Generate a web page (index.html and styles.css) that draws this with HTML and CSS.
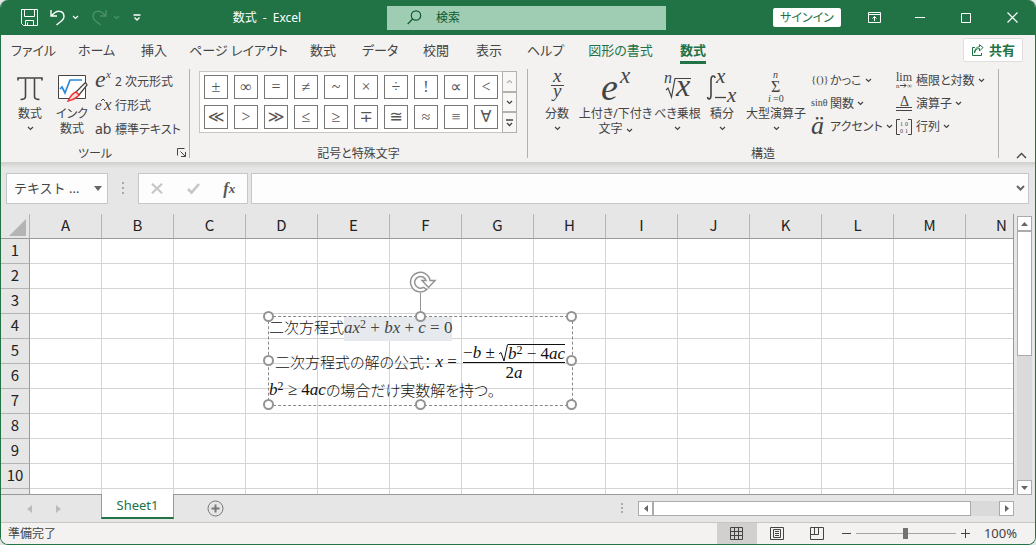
FILE: index.html
```html
<!DOCTYPE html>
<html lang="ja">
<head>
<meta charset="utf-8">
<title>数式 - Excel</title>
<link rel="stylesheet" href="styles.css">
</head>
<body>
<svg class="defs" aria-hidden="true">
  <symbol id="chev" viewBox="0 0 7 5"><path d="M1 1l2.5 2.5L6 1" fill="none" stroke="currentColor" stroke-width="1.2"/></symbol>
</svg>
<div class="window">
  <header class="titlebar">
    <div class="quick">
      <button class="qa qa-save" aria-label="上書き保存"><svg width="17" height="17" viewBox="0 0 17 17" fill="none" stroke="currentColor"><path d="M.5.5h16v16h-14l-2-2zM3.500.5v7h10v-7M4.500 16.500v-5h8v5M6.500 13.500v3"/></svg></button>
      <button class="qa" aria-label="元に戻す"><svg width="16" height="17" viewBox="0 0 16 17" fill="none" stroke="currentColor" stroke-width="1.400"><path d="M1 1v6h6M1 7l4-3.500C9 .8 14 2.500 14 7.500c0 2-1 3-2 4L6.500 16"/></svg><svg class="chev"><use href="#chev"/></svg></button>
      <button class="qa qa-off" aria-label="やり直し"><svg width="16" height="17" viewBox="0 0 16 17" fill="none" stroke="currentColor" stroke-width="1.400"><path d="M15 1v6H9M15 7l-4-3.500C7 .8 2 2.500 2 7.500c0 2 1 3 2 4L9.500 16"/></svg><svg class="chev"><use href="#chev"/></svg></button>
      <button class="qa" aria-label="クイック アクセス"><svg width="8" height="7" viewBox="0 0 8 7" fill="none" stroke="currentColor" stroke-width="1.300"><path d="M.5 1h7M1.500 3.500L4 6l2.500-2.500"/></svg></button>
    </div>
    <h1 class="doc">数式&ensp;-&ensp;Excel</h1>
    <label class="search"><svg width="15" height="15" viewBox="0 0 15 15" fill="none" stroke="currentColor" stroke-width="1.200"><circle cx="9" cy="5.500" r="4.700"/><path d="M5.600 9L.7 14"/></svg><input type="search" placeholder="検索" aria-label="検索"></label>
    <button class="signin">サインイン</button>
    <div class="wincontrols">
      <button aria-label="リボンの表示"><svg width="13" height="11" viewBox="0 0 13 11" fill="none" stroke="currentColor"><path d="M.5.5h12v10H.5zM.5 2.500h12M6.500 9V4.500M4.500 6.500l2-2 2 2"/></svg></button>
      <button aria-label="最小化"><svg width="10" height="10" viewBox="0 0 10 10" stroke="currentColor"><path d="M0 4.500h10"/></svg></button>
      <button aria-label="最大化"><svg width="10" height="10" viewBox="0 0 10 10" fill="none" stroke="currentColor"><path d="M.5.5h9v9h-9z"/></svg></button>
      <button aria-label="閉じる"><svg width="11" height="11" viewBox="0 0 11 11" stroke="currentColor" stroke-width="1.200"><path d="M.5.5l10 10M10.500.5l-10 10"/></svg></button>
    </div>
  </header>

  <nav class="tabs">
    <button>ファイル</button><button>ホーム</button><button>挿入</button><button>ページ レイアウト</button><button>数式</button><button>データ</button><button>校閲</button><button>表示</button><button>ヘルプ</button><button class="ctx">図形の書式</button><button class="ctx active"><span>数式</span></button>
    <button class="share"><svg width="13" height="13" viewBox="0 0 13 13" fill="none" stroke="currentColor"><path d="M4 3.500H1.500v8h9V9M3.500 9C4 6 6 4.500 8.500 4.500V7L12 3.500 8.500.7v2C5.500 3 3.500 5 3.500 9z"/></svg>共有</button>
  </nav>

  <div class="ribbon">
    <section class="group tools">
      <div class="body">
        <button class="big"><svg width="26" height="27" viewBox="0 0 26 27" fill="none" stroke="currentColor"><path d="M1 6V3.500h24V6" stroke-width="1.600"/><path d="M8.500 4v18c0 2-2 3-5 3M17.500 4v18c0 2 2 3 5 3" stroke-width="1.600"/></svg><span>数式</span><svg class="chev"><use href="#chev"/></svg></button>
        <button class="big"><svg width="30" height="30" viewBox="0 0 30 30" fill="none"><path d="M1.500 2.500h27v23h-27z" fill="#fff" stroke="#444"/><path d="M3 16l2-2 3 6 5-13h12" stroke="#2b88d8" stroke-width="1.700"/><path d="M28.500 9.500L19 19l3 3 8-10z" fill="#fff" stroke="#444" stroke-width="1.300"/><path d="M19 19c-4 1-6 5-8 9 4-1 8-2 11-6z" fill="#fbdada" stroke="#e33" stroke-width="1.300"/></svg><span>インク<br>数式</span></button>
        <div class="list">
          <button><svg width="17" height="22" viewBox="0 0 17 22" class="serif"><text x="0" y="17" font-size="24">e</text><text x="11" y="8" font-size="11">x</text></svg>2 次元形式</button>
          <button><svg width="17" height="16" viewBox="0 0 17 16" class="serif"><text x="0" y="13" font-size="15">e</text><text x="9" y="13" font-size="17">x</text><path d="M6 4l2-2 2 2" fill="none" stroke="currentColor"/></svg>行形式</button>
          <button><svg width="17" height="16" viewBox="0 0 17 16"><text x="0" y="13" font-size="14" class="sans">ab</text></svg>標準テキスト</button>
        </div>
      </div>
      <div class="caption">ツール<button class="launch" aria-label="ツールの設定"><svg width="9" height="9" viewBox="0 0 9 9" fill="none" stroke="currentColor"><path d="M.5 7.500v-7h7M3.500 3.500L8 8M8.500 4v4.500H4"/></svg></button></div>
    </section>

    <section class="group symbols">
      <div class="gallery">
        <div class="cells">
          <button>±</button><button>∞</button><button>=</button><button>≠</button><button>~</button><button>×</button><button>÷</button><button>!</button><button>∝</button><button>&lt;</button>
          <button>≪</button><button>&gt;</button><button>≫</button><button>≤</button><button>≥</button><button>∓</button><button>≅</button><button>≈</button><button>≡</button><button>∀</button>
        </div>
        <div class="gscroll">
          <button class="dim" aria-label="前へ"><svg class="chev up"><use href="#chev"/></svg></button>
          <button aria-label="次へ"><svg class="chev"><use href="#chev"/></svg></button>
          <button aria-label="その他"><svg width="7" height="8" viewBox="0 0 7 8" fill="none" stroke="currentColor" stroke-width="1.300"><path d="M0 1h7M1 4l2.500 2.500L6 4"/></svg></button>
        </div>
      </div>
      <div class="caption">記号と特殊文字</div>
    </section>

    <section class="group structures">
      <div class="body">
        <button class="big"><svg width="24" height="30" viewBox="0 0 24 30" class="serif"><text x="8" y="9" font-size="19">x</text><path d="M6 12.500h13" stroke="currentColor"/><text x="8" y="24" font-size="19">y</text></svg><span>分数</span><svg class="chev"><use href="#chev"/></svg></button>
        <button class="big"><svg width="30" height="30" viewBox="0 0 30 30" class="serif"><text x="0" y="27" font-size="38">e</text><text x="19" y="10" font-size="23">x</text></svg><span>上付き/下付き<br>文字 <svg class="chev"><use href="#chev"/></svg></span></button>
        <button class="big"><svg width="30" height="30" viewBox="0 0 30 30" class="serif"><text x="1" y="10" font-size="16">n</text><path d="M3 17l2-2 3.500 9L12 5.500h16" fill="none" stroke="currentColor" stroke-width="1.200"/><text x="13" y="23" font-size="32">x</text></svg><span>べき乗根</span><svg class="chev"><use href="#chev"/></svg></button>
        <button class="big"><svg width="30" height="30" viewBox="0 0 30 30" class="serif"><path d="M8 5c0-3-4-3-4 2v15c0 5-3 5-3.500 2" fill="none" stroke="currentColor" stroke-width="1.600"/><text x="9" y="10" font-size="21">x</text><path d="M8 24.500h11" stroke="currentColor" stroke-width="1.300"/><text x="20" y="29" font-size="21">x</text></svg><span>積分</span><svg class="chev"><use href="#chev"/></svg></button>
        <button class="big"><svg width="24" height="30" viewBox="0 0 24 30" class="serif"><text x="9" y="5" font-size="10">n</text><text x="7" y="19" font-size="16" class="upright">Σ</text><text x="4" y="29" font-size="10">i</text><text x="9" y="29" font-size="10" class="upright">=0</text></svg><span>大型演算子</span><svg class="chev"><use href="#chev"/></svg></button>
        <div class="list wide">
          <button><svg width="17" height="16" viewBox="0 0 17 16" class="serif"><text x="1" y="10" font-size="11" class="upright">{()}</text></svg>かっこ<svg class="chev"><use href="#chev"/></svg></button>
          <button><svg width="17" height="16" viewBox="0 0 17 16" class="serif"><text x="1" y="10" font-size="10" class="upright">sinθ</text></svg>関数<svg class="chev"><use href="#chev"/></svg></button>
          <button><svg width="17" height="22" viewBox="0 0 17 22" class="serif"><text x="1" y="18" font-size="26">ä</text></svg>アクセント<svg class="chev"><use href="#chev"/></svg></button>
        </div>
        <div class="list wide">
          <button><svg width="17" height="18" viewBox="0 0 17 18" class="serif"><text x="0" y="9" font-size="12" class="upright">lim</text><path d="M4 13.500h6M8 11.500l2 2-2 2" fill="none" stroke="currentColor"/><text x="0" y="16" font-size="7" class="upright">n</text><text x="11" y="16" font-size="7" class="upright">∞</text></svg>極限と対数<svg class="chev"><use href="#chev"/></svg></button>
          <button><svg width="17" height="18" viewBox="0 0 17 18" class="serif"><text x="4" y="11" font-size="14" class="upright">Δ</text><path d="M0 12.500h16M0 15.500h16" stroke="currentColor"/></svg>演算子<svg class="chev"><use href="#chev"/></svg></button>
          <button><svg width="17" height="18" viewBox="0 0 17 18" class="serif"><path d="M4 1.500H.5v15H4M12 1.500h3.500v15H12" fill="none" stroke="currentColor"/><text x="4" y="8" font-size="6" class="upright">1</text><text x="9" y="8" font-size="6" class="upright">0</text><text x="4" y="15" font-size="6" class="upright">0</text><text x="9" y="15" font-size="6" class="upright">1</text></svg>行列<svg class="chev"><use href="#chev"/></svg></button>
        </div>
      </div>
      <div class="caption">構造</div>
    </section>
    <button class="collapse" aria-label="リボンを折りたたむ"><svg width="11" height="7" viewBox="0 0 11 7" fill="none" stroke="currentColor" stroke-width="1.400"><path d="M1 6l4.500-4.500L10 6"/></svg></button>
  </div>

  <div class="formulabar">
    <div class="namebox"><input value="テキスト ..." aria-label="名前ボックス"><button aria-label="名前の一覧"><svg width="8" height="5" viewBox="0 0 8 5"><path d="M0 0h8L4 5z" fill="#666"/></svg></button></div>
    <svg class="grip" width="3" height="12" viewBox="0 0 3 12" fill="#aaa"><path d="M0 0h2v2H0zM0 5h2v2H0zM0 10h2v2H0z"/></svg>
    <div class="fx">
      <button aria-label="キャンセル"><svg width="12" height="11" viewBox="0 0 12 11" stroke="#c6c6c6" stroke-width="2.200"><path d="M1 .7l10 9.600M11 .7L1 10.300"/></svg></button>
      <button aria-label="入力"><svg width="13" height="11" viewBox="0 0 13 11" fill="none" stroke="#c6c6c6" stroke-width="2.600"><path d="M1 6l3.500 3.500L12 1"/></svg></button>
      <button aria-label="関数の挿入" class="fxb">f<small>x</small></button>
    </div>
    <div class="formula"><input aria-label="数式バー"><button aria-label="数式バーの展開"><svg width="9" height="6" viewBox="0 0 9 6" fill="none" stroke="#666" stroke-width="2"><path d="M1 1l3.500 3.500L8 1"/></svg></button></div>
  </div>

  <main class="work">
    <div class="sheet">
      <table>
        <colgroup><col class="rh"><col span="14"></colgroup>
        <thead><tr><th class="corner"><svg width="17" height="17" viewBox="0 0 17 17"><path d="M17 0v17H0z" fill="#b4b4b4"/></svg></th><th>A</th><th>B</th><th>C</th><th>D</th><th>E</th><th>F</th><th>G</th><th>H</th><th>I</th><th>J</th><th>K</th><th>L</th><th>M</th><th>N</th></tr></thead>
        <tbody>
          <tr><th>1</th><td></td><td></td><td></td><td></td><td></td><td></td><td></td><td></td><td></td><td></td><td></td><td></td><td></td><td></td></tr>
          <tr><th>2</th><td></td><td></td><td></td><td></td><td></td><td></td><td></td><td></td><td></td><td></td><td></td><td></td><td></td><td></td></tr>
          <tr><th>3</th><td></td><td></td><td></td><td></td><td></td><td></td><td></td><td></td><td></td><td></td><td></td><td></td><td></td><td></td></tr>
          <tr><th>4</th><td></td><td></td><td></td><td></td><td></td><td></td><td></td><td></td><td></td><td></td><td></td><td></td><td></td><td></td></tr>
          <tr><th>5</th><td></td><td></td><td></td><td></td><td></td><td></td><td></td><td></td><td></td><td></td><td></td><td></td><td></td><td></td></tr>
          <tr><th>6</th><td></td><td></td><td></td><td></td><td></td><td></td><td></td><td></td><td></td><td></td><td></td><td></td><td></td><td></td></tr>
          <tr><th>7</th><td></td><td></td><td></td><td></td><td></td><td></td><td></td><td></td><td></td><td></td><td></td><td></td><td></td><td></td></tr>
          <tr><th>8</th><td></td><td></td><td></td><td></td><td></td><td></td><td></td><td></td><td></td><td></td><td></td><td></td><td></td><td></td></tr>
          <tr><th>9</th><td></td><td></td><td></td><td></td><td></td><td></td><td></td><td></td><td></td><td></td><td></td><td></td><td></td><td></td></tr>
          <tr><th>10</th><td></td><td></td><td></td><td></td><td></td><td></td><td></td><td></td><td></td><td></td><td></td><td></td><td></td><td></td></tr>
          <tr><th></th><td></td><td></td><td></td><td></td><td></td><td></td><td></td><td></td><td></td><td></td><td></td><td></td><td></td><td></td></tr>
        </tbody>
      </table>
      <div class="shape">
        <p class="l1">二次方程式<span class="math hl"><i>ax</i><sup>2</sup> + <i>bx</i> + <i>c</i> = 0</span></p>
        <p class="l2">二次方程式の解の公式：<span class="math eq"><i>x</i> = </span><span class="math frac"><span class="num">−<i>b</i> ± <svg width="9" height="18" viewBox="0 0 9 18" fill="none" stroke="currentColor"><path d="M0 10l2-1.500L5 17 8.500.5"/></svg><span class="rad"><i>b</i><sup>2</sup> − 4<i>ac</i></span></span><span class="den">2<i>a</i></span></span></p>
        <p class="l3"><span class="math"><i>b</i><sup>2</sup> ≥ 4<i>ac</i></span>の場合だけ実数解を持つ。</p>
        <svg class="rotate" width="28" height="40" viewBox="0 0 28 40" fill="none" stroke="#949494" stroke-width="1.500"><path d="M11.500 22v18" stroke-width="1"/><path d="M17.800 18.500A9.800 9.800 0 1 1 21 9.500h5L19.500 16.500 13 9.500h4A5.800 5.800 0 1 0 14.500 16.300z" fill="#fff"/></svg>
        <span class="h nw"></span><span class="h n"></span><span class="h ne"></span><span class="h w"></span><span class="h e"></span><span class="h sw"></span><span class="h s"></span><span class="h se"></span>
      </div>
    </div>
    <div class="vscroll">
      <button aria-label="上へ"><svg width="7" height="4" viewBox="0 0 7 4"><path d="M0 4h7L3.500 0z" fill="#666"/></svg></button>
      <div class="track"><div class="thumb"></div></div>
      <button aria-label="下へ"><svg width="7" height="4" viewBox="0 0 7 4"><path d="M0 0h7L3.500 4z" fill="#666"/></svg></button>
    </div>
  </main>

  <div class="sheetbar">
    <div class="sheetnav">
      <button aria-label="前のシート"><svg width="5" height="8" viewBox="0 0 5 8"><path d="M5 0v8L0 4z" fill="#bbb"/></svg></button>
      <button aria-label="次のシート"><svg width="5" height="8" viewBox="0 0 5 8"><path d="M0 0v8l5-4z" fill="#bbb"/></svg></button>
    </div>
    <button class="sheettab">Sheet1</button>
    <button class="add" aria-label="新しいシート"><svg width="17" height="17" viewBox="0 0 17 17" fill="none" stroke="#777"><circle cx="8.500" cy="8.500" r="7.500"/><path d="M8.500 4.500v8M4.500 8.500h8" stroke-width="2"/></svg></button>
    <svg class="grip" width="3" height="12" viewBox="0 0 3 12" fill="#aaa"><path d="M0 0h2v2H0zM0 4h2v2H0zM0 8h2v2H0z"/></svg>
    <div class="hscroll">
      <button aria-label="左へ"><svg width="4" height="7" viewBox="0 0 4 7"><path d="M4 0v7L0 3.500z" fill="#666"/></svg></button>
      <div class="track"><div class="thumb"></div></div>
      <button aria-label="右へ"><svg width="4" height="7" viewBox="0 0 4 7"><path d="M0 0v7l4-3.500z" fill="#666"/></svg></button>
    </div>
  </div>

  <footer class="status">
    <span class="ready">準備完了</span>
    <button class="view on" aria-label="標準"><svg width="13" height="13" viewBox="0 0 13 13" fill="none" stroke="currentColor"><path d="M.5.5h12v12H.5zM4.500.5v12M8.500.5v12M.5 4.500h12M.5 8.500h12"/></svg></button>
    <button class="view" aria-label="ページ レイアウト"><svg width="14" height="13" viewBox="0 0 14 13" fill="none" stroke="currentColor"><path d="M.5.5h13v12H.5zM3.500 2.500h7v8h-7zM5 4.500h4M5 6.500h4M5 8.500h4"/></svg></button>
    <button class="view" aria-label="改ページ プレビュー"><svg width="14" height="13" viewBox="0 0 14 13" fill="none" stroke="currentColor"><path d="M.5.5h13v12H.5zM.5 7.500h8v-7M4.500.5v7"/></svg></button>
    <button class="step" aria-label="縮小"><svg width="9" height="9" viewBox="0 0 9 9" stroke="currentColor"><path d="M0 4.500h9"/></svg></button>
    <input type="range" aria-label="ズーム" min="0" max="100" value="50">
    <button class="step" aria-label="拡大"><svg width="9" height="9" viewBox="0 0 9 9" stroke="currentColor"><path d="M0 4.500h9M4.500 0v9"/></svg></button>
    <span class="pct">100%</span>
  </footer>
</div>
</body>
</html>
```
FILE: styles.css
```css
* { box-sizing: border-box; }
body {
  margin: 0;
  background: #e6e6e6;
  color: #444;
  font: 12px/15px "Noto Sans", "Noto Sans CJK JP", sans-serif;
  font-feature-settings: "palt";
}
button, input {
  margin: 0;
  padding: 0;
  border: 0;
  background: none;
  color: inherit;
  font: inherit;
  font-feature-settings: inherit;
}
button { display: flex; align-items: center; justify-content: center; white-space: nowrap; }
input { min-width: 0; outline: 0; }
svg { flex: none; overflow: visible; }
.defs { display: none; }
.chev { width: 7px; height: 5px; }
.chev.up { transform: rotate(180deg); }
.serif { font-family: "Liberation Serif", serif; font-style: italic; fill: currentColor; }
.upright { font-style: normal; }
.sans { fill: currentColor; }

.window {
  display: flex;
  flex-direction: column;
  height: 100vh;
  border: 1px solid #217346;
  border-top: 0;
  border-radius: 8px;
  overflow: hidden;
  background: #e6e6e6;
}

/* Title bar */
.titlebar { display: flex; align-items: center; height: 35px; background: #217346; color: #fff; flex: none; }
.quick { display: flex; align-items: center; gap: 12px; width: 160px; padding-left: 20px; }
.qa { gap: 6px; }
.qa-off { color: #4b8f69; }
.quick .qa:last-child { margin-left: 1px; }
.doc { width: 212px; margin: 0; text-align: center; font-size: 12px; font-weight: 400; }
.search { display: flex; align-items: center; gap: 14px; width: 279px; height: 24px; margin-left: 14px; padding-left: 20px; background: #9fcdb3; color: #0e5a2f; }
.search input { flex: 1; }
.search input::placeholder { color: #0e5a2f; opacity: 1; }
.signin { width: 68px; height: 19px; margin-left: auto; margin-right: 10px; border-radius: 2px; background: #fff; color: #217346; }
.wincontrols { display: flex; align-self: stretch; }
.wincontrols button { width: 46px; }

/* Ribbon tabs */
.tabs {
  display: grid;
  grid-template-columns: 65px 61px 54px 115px 54px 60px 52px 54px 59px 91px 54px 1fr;
  height: 31px;
  flex: none;
  background: #f3f2f1;
  font-size: 13px;
}
.tabs .ctx { color: #217346; }
.tabs .active { font-weight: 700; }
.active span { padding: 6px 0 3px; border-bottom: 3px solid #217346; }
.tabs .share { justify-self: end; gap: 5px; width: 60px; height: 24px; margin: 3px 12px 0 0; border: 1px solid #e1dfdd; border-radius: 2px; background: #fff; color: #217346; font-weight: 700; }

/* Ribbon */
.ribbon { display: flex; height: 96px; flex: none; padding-top: 3px; background: #f3f2f1; }
.group { display: flex; flex-direction: column; height: 89px; border-right: 1px solid #b3b0ad; }
.body { display: flex; flex: 1; min-height: 0; }
.caption { display: flex; align-items: center; justify-content: center; position: relative; height: 15px; margin-bottom: -3px; flex: none; }
.launch { position: absolute; right: 3px; top: 2px; }
.big { flex-direction: column; justify-content: flex-start; align-items: center; padding-top: 4px; }
.big > svg:first-child { height: 30px; margin-bottom: 3px; }
.big > .chev { margin-top: 5px; }
.list { display: flex; flex-direction: column; }
.list button { justify-content: flex-start; height: 24px; gap: 3px; }
.list button > svg:first-child { width: 17px; }
.tools { width: 189px; }
.tools .body { padding-left: 8px; }
.tools .big { width: 42px; }
.tools .list { margin-left: 2px; }
.symbols { width: 338px; }
.structures { width: 471px; }
.structures .body { display: grid; grid-template-columns: 42px 75px 49px 40px 68px 86px 1fr; padding-left: 8px; }
.wide button { height: 23px; gap: 3px; }

.gallery { display: flex; width: 318px; height: 62px; margin: 2px 0 0 9px; border: 1px solid #c8c6c4; background: #fff; flex: none; }
.symbols .caption { margin-top: auto; }
.cells { display: grid; grid-template-columns: repeat(10, 24px); grid-auto-rows: 24px; gap: 6px; padding: 3px 4px; }
.cells button { border: 1px solid #777; font: 16px/18px "Liberation Serif", "DejaVu Sans", serif; color: #555; }
.gscroll { display: flex; flex-direction: column; width: 15px; margin: -1px -1px -1px auto; }
.gscroll button { flex: 1; border: 1px solid #b3b0ad; background: #f8f7f6; }
.gscroll .dim { color: #b3b0ad; }
.collapse { align-self: flex-end; margin: 0 8px 3px auto; }

/* Formula bar */
.formulabar { display: flex; align-items: center; height: 52px; flex: none; padding: 0 6px 0 5px; background: linear-gradient(#d0cfce, #e6e6e6 6px); font-feature-settings: normal; }
.namebox, .fx, .formula { display: flex; align-items: center; height: 31px; border: 1px solid #c6c6c6; background: #fdfdfd; }
.namebox { width: 102px; padding: 0 5px 0 7px; font-size: 13px; }
.namebox input { flex: 1; width: 0; }
.formulabar .grip { margin: 0 13px 0 14px; }
.fx { width: 110px; justify-content: space-around; }
.fxb { font: italic 700 16px/15px "Liberation Serif", serif; color: #555; }
.fxb small { font-size: 13px; align-self: flex-end; }
.formula { flex: 1; margin-left: 3px; padding-right: 3px; }
.formula input { flex: 1; }

/* Sheet */
.work { display: flex; flex: 1; min-height: 0; }
.sheet { position: relative; flex: 1; min-width: 0; overflow: hidden; border-bottom: 1px solid #999; border-right: 1px solid #999; background: #e6e6e6; }
table { width: 1037px; table-layout: fixed; border-collapse: separate; border-spacing: 0; background: #fff; }
col { width: 72px; }
col.rh { width: 29px; }
th, td { height: 25px; padding: 0; border: solid #d4d4d4; border-width: 0 1px 1px 0; }
th { padding-bottom: 2px; background: #e6e6e6; color: #222; font: 15px/20px "Noto Sans CJK JP", sans-serif; }
thead th { border-bottom-color: #999; border-right-color: #b4b4b4; }
tbody th { border-right-color: #999; border-bottom-color: #b4b4b4; }
.corner svg { display: block; margin: 4px 3px 0 auto; }

.shape { position: absolute; left: 267px; top: 102px; width: 305px; height: 90px; border: 1px dashed #888; color: #111; font-size: 15px; line-height: 20px; font-family: "Noto Sans CJK JP", sans-serif; font-weight: 300; }
.shape p { display: flex; align-items: center; margin: 0; white-space: pre; }
.math { font-family: "Liberation Serif", serif; font-size: 17px; font-weight: 400; }
.math sup { font-size: 12px; line-height: 0; vertical-align: 5px; }
.shape .l1 { height: 24px; align-items: flex-start; }
.hl { align-self: stretch; line-height: 22px; background: #e6eaee; color: #444; }
.shape .l2 { height: 38px; margin-top: 2px; padding-left: 6px; }
.eq { margin: 0 2px 0 4px; }
.frac { display: flex; flex-direction: column; }
.num { display: flex; align-items: flex-end; height: 20px; line-height: 18px; border-bottom: 1px solid #111; }
.rad { height: 18px; border-top: 1px solid #111; }
.den { height: 18px; line-height: 20px; text-align: center; }
.shape .l3 { height: 18px; }
.rotate { position: absolute; left: 140px; top: -46px; }
.h { position: absolute; width: 11px; height: 11px; margin: -6px; border: 2px solid #949494; border-radius: 50%; background: #fff; }
.nw, .n, .ne { top: 0; }
.w, .e { top: 50%; }
.sw, .s, .se { top: 100%; }
.nw, .w, .sw { left: 0; }
.n, .s { left: 50%; }
.ne, .e, .se { left: 100%; }

/* Scroll bars */
.vscroll { display: flex; flex-direction: column; width: 15px; margin: 2px 3px 0 3px; }
.vscroll button, .hscroll button { width: 15px; height: 15px; flex: none; border: 1px solid #ababab; background: #fff; }
.track { flex: 1; background: #dadada; }
.thumb { border: 1px solid #ababab; background: #fff; }
.vscroll .thumb { height: 50%; }
.hscroll .thumb { width: 92%; height: 15px; }

.sheetbar { display: flex; align-items: center; height: 27px; flex: none; }
.sheetnav { display: flex; justify-content: space-between; width: 100px; padding: 0 40px 0 26px; }
.sheettab { align-self: flex-start; width: 73px; height: 25px; margin-top: -1px; border: 1px solid #999; border-width: 0 1px 2px; border-bottom-color: #217346; background: #fff; color: #217346; font-size: 13px; position: relative; }
.add { margin-left: 33px; }
.sheetbar .grip { margin: 0 14px 0 auto; }
.hscroll { display: flex; width: 376px; margin-right: 21px; }

/* Status bar */
.status { display: flex; align-items: center; height: 22px; flex: none; border-top: 1px solid #c6c6c6; background: #f3f2f1; }
.ready { margin: 0 auto 0 7px; }
.view { width: 40px; height: 21px; }
.view.on { background: #d2d0ce; }
.step { width: 19px; }
.status input { appearance: none; width: 100px; height: 11px; background: linear-gradient(#a6a6a6, #a6a6a6) center / 100% 1px no-repeat; }
.status input::-webkit-slider-thumb { appearance: none; width: 5px; height: 11px; background: #737373; }
.pct { margin: 0 18px 0 9px; font-size: 13px; }
```
